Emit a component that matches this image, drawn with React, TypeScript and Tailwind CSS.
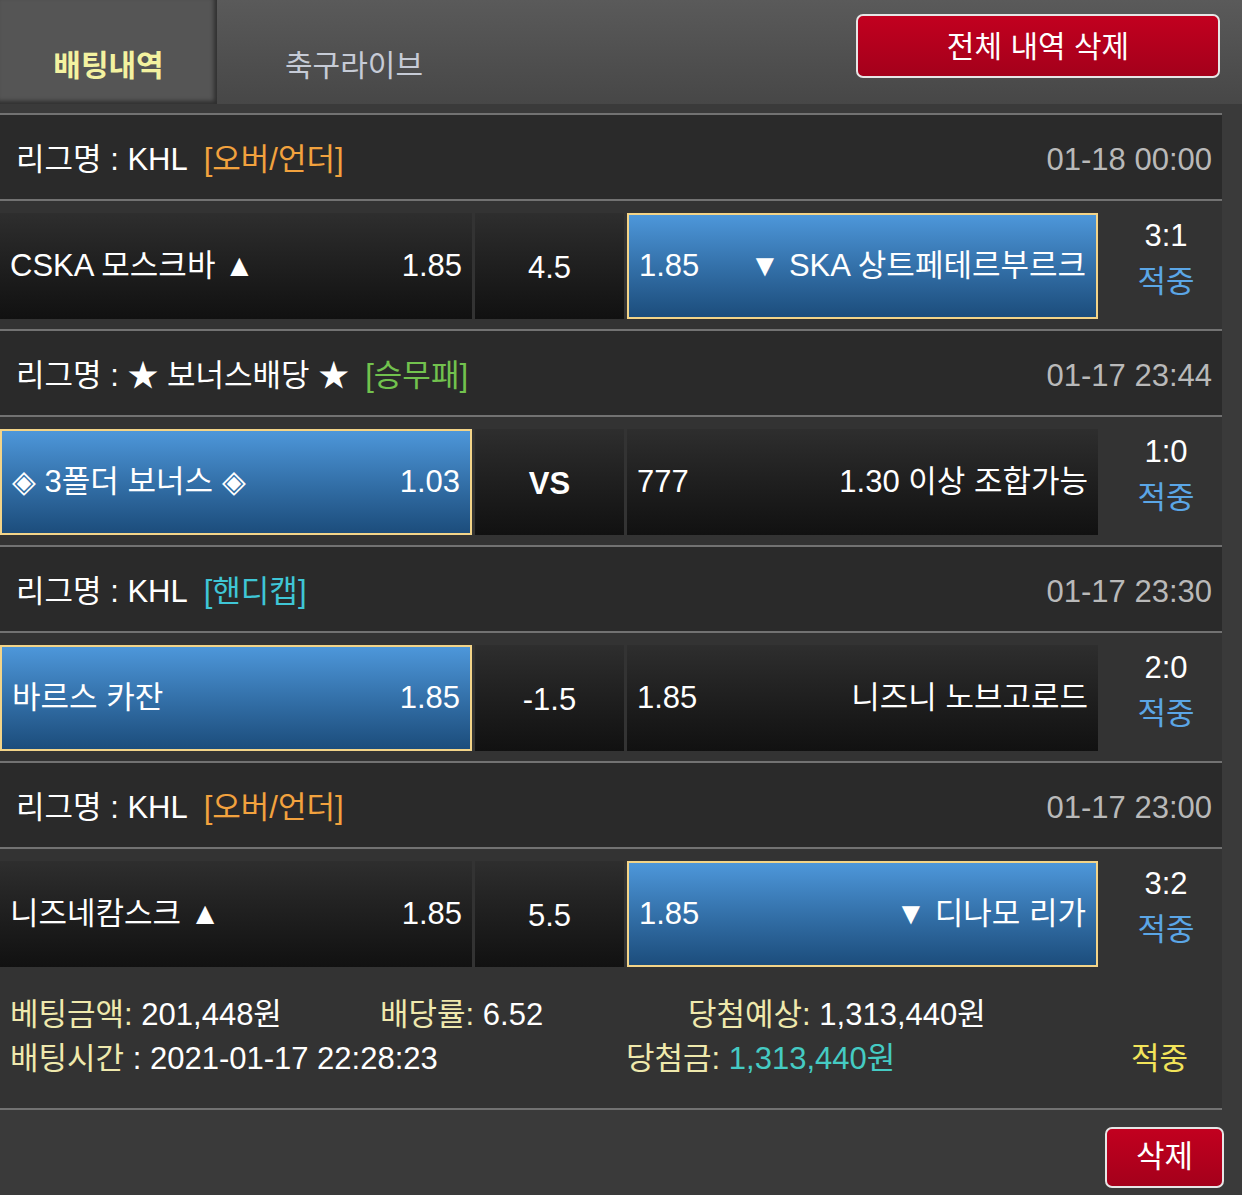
import React from "react";

type Game = {
  league: string;
  type: string;
  typeColor: string;
  date: string;
  home: string;
  homeOdds: string;
  mid: string;
  away: string;
  awayOdds: string;
  pick: "home" | "away";
  score: string;
};

const games: Game[] = [
  {
    league: "KHL",
    type: "[오버/언더]",
    typeColor: "text-[#f2a23e]",
    date: "01-18 00:00",
    home: "CSKA 모스크바 ▲",
    homeOdds: "1.85",
    mid: "4.5",
    away: "▼ SKA 상트페테르부르크",
    awayOdds: "1.85",
    pick: "away",
    score: "3:1",
  },
  {
    league: "★ 보너스배당 ★",
    type: "[승무패]",
    typeColor: "text-[#72c24e]",
    date: "01-17 23:44",
    home: "◈ 3폴더 보너스 ◈",
    homeOdds: "1.03",
    mid: "VS",
    away: "1.30 이상 조합가능",
    awayOdds: "777",
    pick: "home",
    score: "1:0",
  },
  {
    league: "KHL",
    type: "[핸디캡]",
    typeColor: "text-[#3fc6d6]",
    date: "01-17 23:30",
    home: "바르스 카잔",
    homeOdds: "1.85",
    mid: "-1.5",
    away: "니즈니 노브고로드",
    awayOdds: "1.85",
    pick: "home",
    score: "2:0",
  },
  {
    league: "KHL",
    type: "[오버/언더]",
    typeColor: "text-[#f2a23e]",
    date: "01-17 23:00",
    home: "니즈네캄스크 ▲",
    homeOdds: "1.85",
    mid: "5.5",
    away: "▼ 디나모 리가",
    awayOdds: "1.85",
    pick: "away",
    score: "3:2",
  },
];

function Divider() {
  return <div className="h-[2px] bg-[#727272]" />;
}

function TeamCell({
  left,
  right,
  active,
}: {
  left: string;
  right: string;
  active: boolean;
}) {
  return (
    <div
      className={`flex h-[106px] items-center justify-between px-[10px] ${
        active
          ? "border-2 border-[#f3d488] bg-gradient-to-b from-[#4d97da] to-[#1c4d7c]"
          : "bg-gradient-to-b from-[#2e2e2e] to-[#111111]"
      }`}
    >
      <span className="whitespace-nowrap">{left}</span>
      <span className="whitespace-nowrap">{right}</span>
    </div>
  );
}

function GameBlock({ g, last }: { g: Game; last: boolean }) {
  return (
    <div>
      <Divider />
      <div className="flex h-[84px] items-center justify-between bg-[#2a2a2a] pt-[7px] pl-[16px] pr-[10px]">
        <div className="flex items-center gap-[16px]">
          <span>리그명 : {g.league}</span>
          <span className={g.typeColor}>{g.type}</span>
        </div>
        <span className="text-[#b9b9b9]">{g.date}</span>
      </div>
      <Divider />
      <div className={`flex bg-[#333333] pt-[12px] ${last ? "h-[118px]" : "h-[128px] pb-[10px]"}`}>
        <div className="w-[472px]">
          <TeamCell left={g.home} right={g.homeOdds} active={g.pick === "home"} />
        </div>
        <div className="ml-[3px] flex h-[106px] w-[149px] items-center justify-center bg-gradient-to-b from-[#2e2e2e] to-[#111111] pt-[4px]">
          <span className={g.mid === "VS" ? "font-bold" : ""}>{g.mid}</span>
        </div>
        <div className="ml-[3px] w-[471px]">
          <TeamCell left={g.awayOdds} right={g.away} active={g.pick === "away"} />
        </div>
        <div className="flex h-[106px] flex-1 flex-col items-center justify-center gap-[10px] pl-[12px] pb-[14px] leading-[36px]">
          <span>{g.score}</span>
          <span className="text-[#5ba6e6]">적중</span>
        </div>
      </div>
    </div>
  );
}

export default function App() {
  return (
    <div
      className="min-h-[1195px] w-[1242px] bg-[#3a3a3a] text-[31px] text-white"
      style={{ fontFamily: '"Liberation Sans", "Noto Sans CJK KR", sans-serif' }}
    >
      <div className="flex h-[104px] items-stretch bg-gradient-to-b from-[#5a5a5a] to-[#474747] text-[30px]">
        <div className="flex w-[217px] items-center justify-center bg-[#555555] pt-[26px] shadow-[inset_-3px_-3px_4px_rgba(0,0,0,0.45)]">
          <span className="font-bold text-[#f3f2a0]">배팅내역</span>
        </div>
        <div className="flex items-center pl-[68px] pt-[26px] text-[#c6cbd6]">축구라이브</div>
        <div className="ml-auto pt-[14px] pr-[22px]">
          <button className="h-[64px] w-[364px] rounded-[7px] border-2 border-[#e6e6e6] bg-gradient-to-b from-[#c2001f] to-[#a4001b] text-white">
            전체 내역 삭제
          </button>
        </div>
      </div>

      <div className="h-[9px]" />

      <div className="w-[1222px]">
        {games.map((g, i) => (
          <GameBlock key={i} g={g} last={i === games.length - 1} />
        ))}

        <div className="flex h-[141px] flex-col bg-[#333333] pt-[26px]">
          <div className="flex h-[44px] items-center pl-[10px]">
            <span className="w-[370px]">
              <span className="text-[#efe9ad]">베팅금액:</span> 201,448원
            </span>
            <span className="w-[308px]">
              <span className="text-[#efe9ad]">배당률:</span> 6.52
            </span>
            <span>
              <span className="text-[#efe9ad]">당첨예상:</span> 1,313,440원
            </span>
          </div>
          <div className="flex h-[44px] items-center pl-[10px]">
            <span className="w-[616px]">
              <span className="text-[#efe9ad]">배팅시간</span> : 2021-01-17 22:28:23
            </span>
            <span className="w-[505px]">
              <span className="text-[#efe9ad]">당첨금:</span>{" "}
              <span className="text-[#45cbc3]">1,313,440원</span>
            </span>
            <span className="text-[#f2e45a]">적중</span>
          </div>
        </div>
        <Divider />
      </div>

      <div className="flex justify-end pt-[17px] pr-[18px]">
        <button className="h-[61px] w-[119px] rounded-[7px] border-2 border-[#e6e6e6] bg-gradient-to-b from-[#c2001f] to-[#a4001b] text-white">
          삭제
        </button>
      </div>
    </div>
  );
}
